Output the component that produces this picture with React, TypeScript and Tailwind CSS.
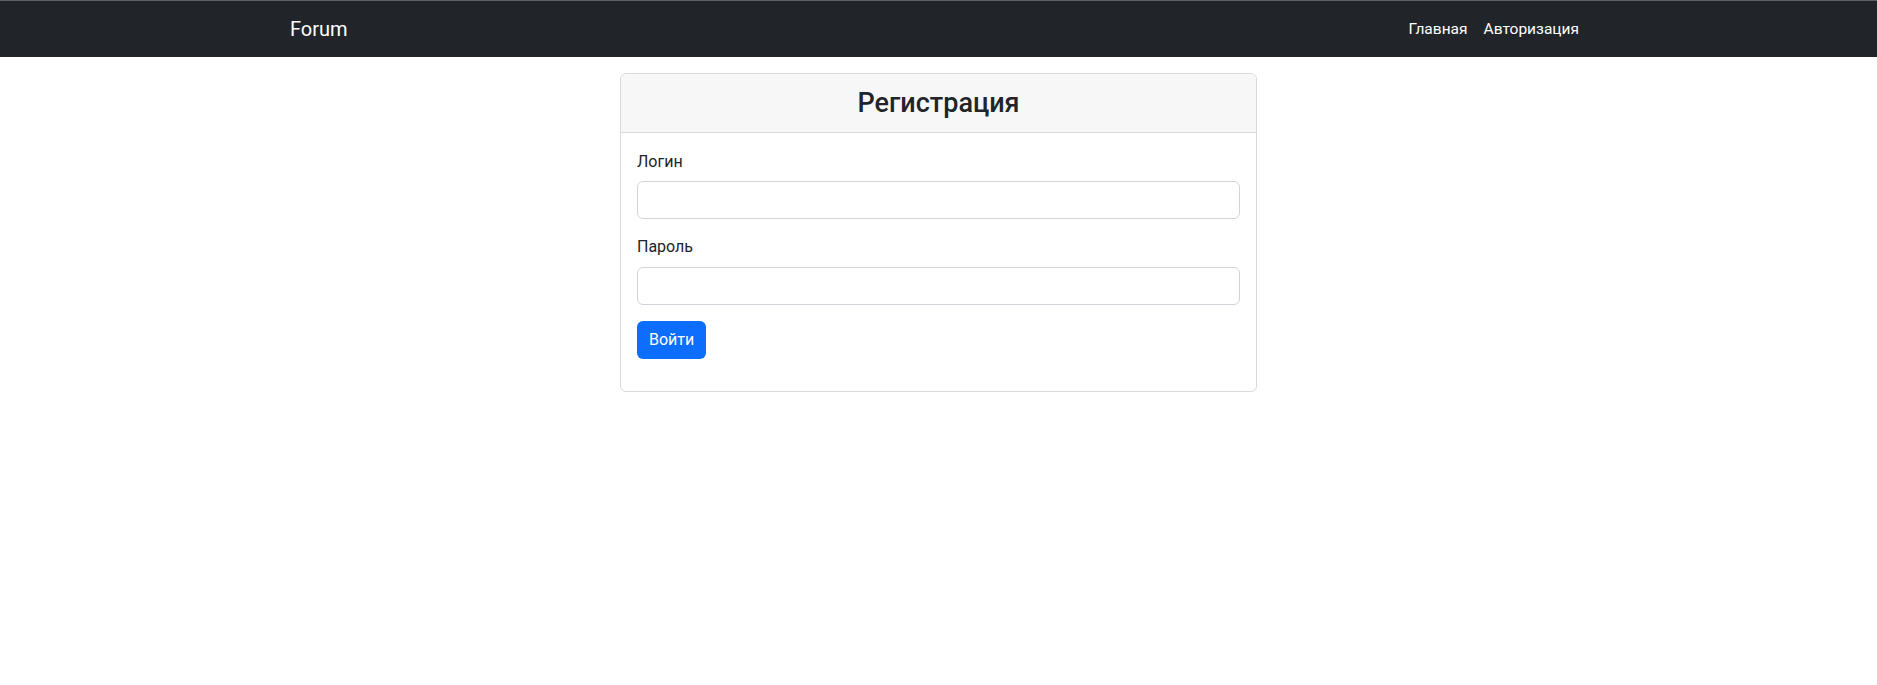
import React from "react";

export default function App() {
  const font = { fontFamily: 'Roboto, "Noto Sans", sans-serif' };
  return (
    <div className="min-h-[685px] bg-white text-[#212529]" style={font}>
      <nav className="h-[57px] bg-[#212529] border-t border-[#5c6166]">
        <div className="mx-auto w-[1321px] px-[12px] h-full flex items-center justify-between">
          <a className="text-white text-[20px] leading-[30px]">Forum</a>
          <div className="flex items-center">
            <a className="px-[8px] text-white text-[15.5px] leading-[24px]">Главная</a>
            <a className="px-[8px] text-white text-[15.5px] leading-[24px]">Авторизация</a>
          </div>
        </div>
      </nav>
      <div className="mx-auto w-[1321px] px-[12px] flex justify-center">
        <div className="mt-[16px] w-[637px] border border-[#dadada] rounded-[6px] overflow-hidden">
          <div className="h-[59px] bg-[#f7f7f7] border-b border-[#dadada] flex items-center justify-center">
            <h2 className="text-[27px] leading-[34px] font-medium text-[#212529]">Регистрация</h2>
          </div>
          <div className="pt-[17px] px-[16px] pb-[16px]">
            <div className="mb-[16px]">
              <label className="block mb-[7px] text-[16px] leading-[24px] text-[#212529]">Логин</label>
              <input className="block w-full h-[38px] border border-[#ced4da] rounded-[6px] px-[12px] text-[16px] outline-none" />
            </div>
            <div className="mb-[16px]">
              <label className="block mb-[8px] text-[16px] leading-[24px] text-[#212529]">Пароль</label>
              <input type="password" className="block w-full h-[38px] border border-[#ced4da] rounded-[6px] px-[12px] text-[16px] outline-none" />
            </div>
            <button className="mb-[16px] h-[38px] px-[12px] bg-[#0d6efd] text-white rounded-[6px] text-[16px] leading-[24px]">Войти</button>
          </div>
        </div>
      </div>
    </div>
  );
}
